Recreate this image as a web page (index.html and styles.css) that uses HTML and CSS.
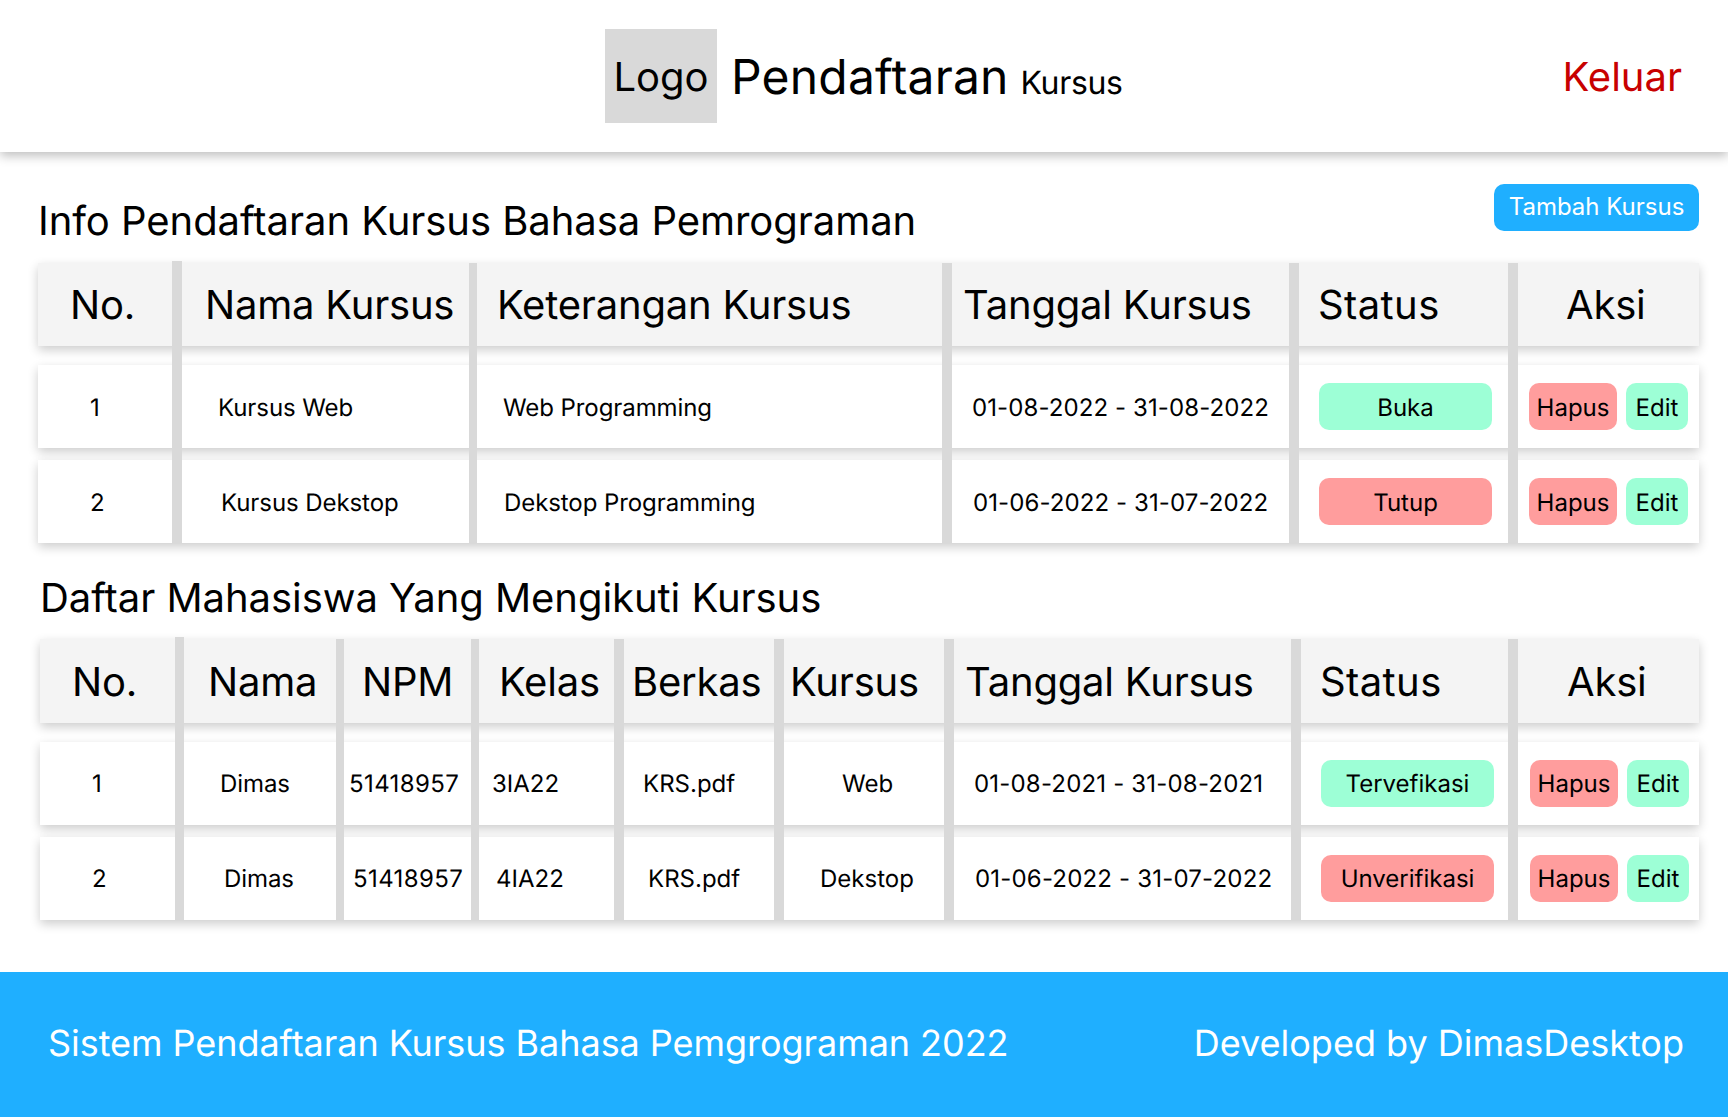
FILE: index.html
```html
<!DOCTYPE html>
<html>

<head>
    <meta charset="utf-8">
    <title>Pendaftaran Kursus</title>
    <link rel="stylesheet" href="styles.css">
</head>

<body>
    <header class="topbar">
        <div class="logo">Logo</div>
        <div class="brand">Pendaftaran <small>Kursus</small></div>
        <a class="logout">Keluar</a>
    </header>

    <main>
        <div class="title-row">
            <h2 class="title">Info Pendaftaran Kursus Bahasa Pemrograman</h2>
            <button class="btn-add">Tambah Kursus</button>
        </div>

        <div class="table courses">
            <div class="row head">
                <div class="cell no">No.</div>
                <div class="cell name">Nama Kursus</div>
                <div class="cell desc">Keterangan Kursus</div>
                <div class="cell date">Tanggal Kursus</div>
                <div class="cell status">Status</div>
                <div class="cell action">Aksi</div>
            </div>
            <div class="row">
                <div class="cell no">1</div>
                <div class="cell name">Kursus Web</div>
                <div class="cell desc">Web Programming</div>
                <div class="cell date">01-08-2022 - 31-08-2022</div>
                <div class="cell status"><span class="pill green">Buka</span></div>
                <div class="cell action"><span class="pill red hapus">Hapus</span><span class="pill green edit">Edit</span></div>
            </div>
            <div class="row second">
                <div class="cell no">2</div>
                <div class="cell name">Kursus Dekstop</div>
                <div class="cell desc">Dekstop Programming</div>
                <div class="cell date">01-06-2022 - 31-07-2022</div>
                <div class="cell status"><span class="pill red">Tutup</span></div>
                <div class="cell action"><span class="pill red hapus">Hapus</span><span class="pill green edit">Edit</span></div>
            </div>
        </div>

        <h2 class="title title-students">Daftar Mahasiswa Yang Mengikuti Kursus</h2>

        <div class="table students">
            <div class="row head">
                <div class="cell no">No.</div>
                <div class="cell name">Nama</div>
                <div class="cell npm">NPM</div>
                <div class="cell kelas">Kelas</div>
                <div class="cell berkas">Berkas</div>
                <div class="cell kursus">Kursus</div>
                <div class="cell date">Tanggal Kursus</div>
                <div class="cell status">Status</div>
                <div class="cell action">Aksi</div>
            </div>
            <div class="row">
                <div class="cell no">1</div>
                <div class="cell name">Dimas</div>
                <div class="cell npm">51418957</div>
                <div class="cell kelas">3IA22</div>
                <div class="cell berkas">KRS.pdf</div>
                <div class="cell kursus">Web</div>
                <div class="cell date">01-08-2021 - 31-08-2021</div>
                <div class="cell status"><span class="pill green">Tervefikasi</span></div>
                <div class="cell action"><span class="pill red hapus">Hapus</span><span class="pill green edit">Edit</span></div>
            </div>
            <div class="row second">
                <div class="cell no">2</div>
                <div class="cell name">Dimas</div>
                <div class="cell npm">51418957</div>
                <div class="cell kelas">4IA22</div>
                <div class="cell berkas">KRS.pdf</div>
                <div class="cell kursus">Dekstop</div>
                <div class="cell date">01-06-2022 - 31-07-2022</div>
                <div class="cell status"><span class="pill red">Unverifikasi</span></div>
                <div class="cell action"><span class="pill red hapus">Hapus</span><span class="pill green edit">Edit</span></div>
            </div>
        </div>
    </main>

    <footer class="footer">
        <span class="footer-left">Sistem Pendaftaran Kursus Bahasa Pemgrograman 2022</span>
        <span>Developed by DimasDesktop</span>
    </footer>
</body>

</html>
```

FILE: styles.css
```css
html,
body {
    height: 100%;
}

body {
    margin: 0;
    display: flex;
    flex-direction: column;
    background: #fff;
    color: #000;
    font-family: "Inter", "Liberation Sans", sans-serif;
    text-rendering: geometricPrecision;
    overflow: hidden;
}

.topbar {
    position: relative;
    z-index: 1;
    flex: none;
    height: 152px;
    display: flex;
    align-items: center;
    padding: 0 46px 0 605px;
    background: #fff;
    box-shadow: 0 4px 10px rgba(0, 0, 0, 0.25);
    box-sizing: border-box;
}

.logo {
    width: 112px;
    height: 94px;
    display: flex;
    align-items: center;
    justify-content: center;
    background: #d9d9d9;
    font-size: 40px;
}

.brand {
    margin-left: 14px;
    font-size: 48px;
    letter-spacing: 0.2px;
}

.brand small {
    margin-left: -2px;
    font-size: 32px;
    letter-spacing: -0.3px;
}

.logout {
    margin-left: auto;
    padding-top: 1px;
    font-size: 40px;
    color: #c80000;
}

main {
    flex: 1;
    padding: 0 29px 0 38px;
}

.title-row {
    height: 111px;
    display: flex;
    justify-content: space-between;
    align-items: flex-start;
}

.title {
    margin: 0;
    font-size: 40px;
    font-weight: 400;
    line-height: 48px;
    letter-spacing: -0.05px;
}

.title-row .title {
    margin-top: 45px;
}

.btn-add {
    margin-top: 32px;
    width: 205px;
    height: 47px;
    padding: 0 0 3px;
    border: 0;
    border-radius: 10px;
    background: #1fafff;
    color: #fff;
    font-family: inherit;
    font-size: 24px;
}

.title-students {
    margin: 31px 0 0 2px;
    height: 65px;
}

.courses .row {
    display: grid;
    grid-template-columns: 134px 297px 473px 347px 219px 191px;
}

.students {
    margin-left: 2px;
}

.students .row {
    display: grid;
    grid-template-columns: 135px 161px 135px 143px 160px 170px 347px 217px 191px;
}

.row {
    height: 83px;
    margin-top: 19px;
    background: #fff;
    box-shadow: 0 4px 10px rgba(0, 0, 0, 0.2);
}

.row.second {
    margin-top: 12px;
}

.row.head {
    margin-top: 0;
    background: #f4f4f4;
}

.students .row.head {
    height: 84px;
}

.cell {
    --sep: 10px;
    position: relative;
    display: flex;
    align-items: center;
    border-left: var(--sep) solid #d9d9d9;
    box-sizing: border-box;
    white-space: nowrap;
    font-size: 24px;
}

.cell:first-child {
    border-left: 0;
}

/* separator keeps running through the gap between rows */
.cell:not(:first-child)::before {
    content: "";
    position: absolute;
    left: calc(var(--sep) * -1);
    bottom: 100%;
    width: var(--sep);
    height: 19px;
    background: #d9d9d9;
}

.head .cell {
    font-size: 40px;
    letter-spacing: -0.2px;
}

.head .cell:not(:first-child)::before {
    display: none;
}

/* first separator sticks out a little above the head row */
.head .cell.name::before {
    display: block;
    height: 2px;
}

.head .cell.status {
    letter-spacing: 0.4px;
}

.courses .row:not(.head) .cell:not(.status):not(.action) {
    padding-top: 2px;
}

.courses .pill {
    padding-top: 2px;
}

.courses .desc,
.students .npm,
.students .kelas {
    --sep: 8px;
}

.students .name {
    --sep: 9px;
}

.row:not(.head) .name,
.row:not(.head) .desc {
    letter-spacing: -0.08px;
}

.row:not(.head) .date {
    letter-spacing: 0.1px;
}

.students .row:not(.head) .date {
    letter-spacing: 0.19px;
}

.students .second .date {
    letter-spacing: 0;
}

.row:not(.head) .npm {
    letter-spacing: 0.4px;
}

.pill {
    height: 47px;
    display: flex;
    align-items: center;
    justify-content: center;
    border-radius: 10px;
    box-sizing: border-box;
}

.status .pill {
    width: 173px;
}

.hapus {
    width: 88px;
    margin-right: 9px;
}

.edit {
    width: 62px;
}

.green {
    background: #9dffd6;
}

.red {
    background: #ff9d9d;
}

/* text starts are not on one line in this design, so each column has its own */
.courses .head .no { padding-left: 32px; }
.courses .head .name { padding-left: 23px; }
.courses .head .desc { padding-left: 20px; }
.courses .head .date { padding-left: 11px; }
.courses .head .status { padding-left: 19px; }
.courses .head .action { padding-left: 48px; }

.courses .no { padding-left: 52px; }
.courses .name { padding-left: 36px; }
.courses .desc { padding-left: 26px; }
.courses .date { padding-left: 20px; }
.courses .status { padding-left: 20px; }
.courses .action { padding-left: 11px; }

.courses .second .name { padding-left: 39px; }
.courses .second .desc { padding-left: 27px; }
.courses .second .date { padding-left: 21px; }

.students .head .no { padding-left: 32px; }
.students .head .name { padding-left: 24px; }
.students .head .npm { padding-left: 18px; }
.students .head .kelas { padding-left: 20px; }
.students .head .berkas { padding-left: 8px; }
.students .head .kursus { padding-left: 6px; }
.students .head .date { padding-left: 11px; }
.students .head .status { padding-left: 19px; }
.students .head .action { padding-left: 49px; }

.students .no { padding-left: 52px; }
.students .name { padding-left: 36px; }
.students .npm { padding-left: 5px; }
.students .kelas { padding-left: 13px; }
.students .berkas { padding-left: 19px; }
.students .kursus { padding-left: 58px; }
.students .date { padding-left: 20px; }
.students .status { padding-left: 20px; }
.students .action { padding-left: 12px; }

.students .second .name { padding-left: 40px; }
.students .second .npm { padding-left: 9px; }
.students .second .kelas { padding-left: 17px; }
.students .second .berkas { padding-left: 24px; }
.students .second .kursus { padding-left: 36px; }
.students .second .date { padding-left: 21px; }

.footer {
    flex: none;
    height: 145px;
    display: flex;
    justify-content: space-between;
    align-items: center;
    padding: 0 44px 4px 48px;
    background: #1fafff;
    color: #fff;
    font-size: 36px;
    box-sizing: border-box;
}

.footer-left {
    letter-spacing: -0.05px;
}
```
